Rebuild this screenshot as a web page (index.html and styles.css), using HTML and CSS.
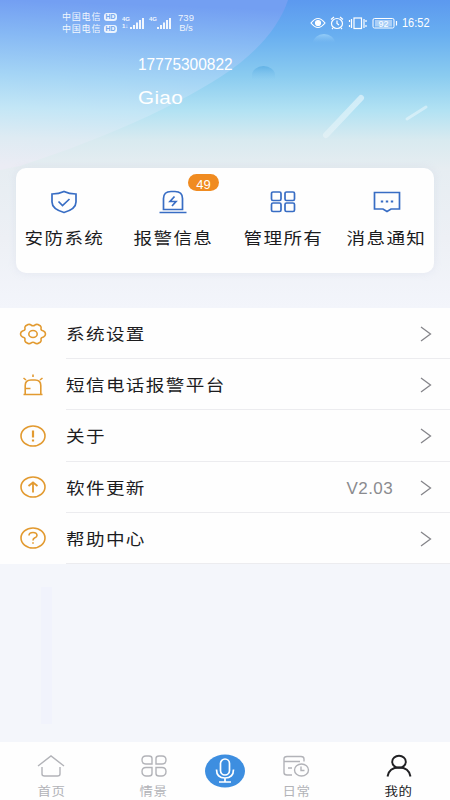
FILE: index.html
```html
<!DOCTYPE html>
<html lang="zh-CN">
<head>
<meta charset="utf-8">
<title>我的</title>
<link rel="stylesheet" href="styles.css">
</head>
<body>
<div class="app">
  <header class="hero">
    <svg class="scene" viewBox="0 0 450 170" preserveAspectRatio="none" aria-hidden="true">
      <defs>
        <linearGradient id="sky" x1="0" y1="0" x2="0" y2="1">
          <stop offset="0" stop-color="#5c99ef"/><stop offset=".2" stop-color="#68aef0"/>
          <stop offset=".45" stop-color="#8bccf0"/><stop offset=".65" stop-color="#b2e2f3"/>
          <stop offset=".82" stop-color="#d8eaf0"/><stop offset="1" stop-color="#e7edf1"/>
        </linearGradient>
        <linearGradient id="hill" gradientUnits="userSpaceOnUse" x1="6" y1="0" x2="0" y2="165">
          <stop offset="0" stop-color="#739ff2"/><stop offset=".2" stop-color="#86b8f4"/>
          <stop offset=".45" stop-color="#a5d5f5"/><stop offset=".65" stop-color="#c3e6f6"/>
          <stop offset=".83" stop-color="#deebf3"/><stop offset="1" stop-color="#ebecf4"/>
        </linearGradient>
        <linearGradient id="domeLight" x1="0" y1="0" x2="0" y2="1">
          <stop offset="0" stop-color="#94cdf8"/><stop offset="1" stop-color="#7fbdf1" stop-opacity="0"/>
        </linearGradient>
        <linearGradient id="domeDark" x1="0" y1="0" x2="0" y2="1">
          <stop offset="0" stop-color="#62b2e6"/><stop offset="1" stop-color="#83c6ee" stop-opacity="0"/>
        </linearGradient>
        <linearGradient id="ray" x1="1" y1="0" x2="0" y2="1">
          <stop offset="0" stop-color="#fff" stop-opacity=".5"/><stop offset="1" stop-color="#fff" stop-opacity=".3"/>
        </linearGradient>
      </defs>
      <rect width="450" height="170" fill="url(#sky)"/>
      <path d="M0 0H288C281 22 263 45 240 63C196 97 115 135 20 166L0 170Z" fill="url(#hill)"/>
      <path d="M313 43a11 9 0 0 1 22 0Z" fill="url(#domeLight)"/>
      <path d="M252 80v-5a11.500 9 0 0 1 23 0v5Z" fill="url(#domeDark)"/>
      <path d="M326 135L361 98" stroke="url(#ray)" stroke-width="6" stroke-linecap="round"/>
      <path d="M407 119L426 107" stroke="#fff" stroke-opacity=".4" stroke-width="3" stroke-linecap="round"/>
    </svg>
    <div class="status">
      <div class="carriers">
        <div class="carrier"><span>中国电信</span><b>HD</b></div>
        <div class="carrier"><span>中国电信</span><b>HD</b></div>
      </div>
      <svg class="signals" width="52" height="16" viewBox="0 0 52 16" fill="#fff">
        <text class="tiny" x="0" y="6">4G</text><text class="tiny" x="0" y="13">1↓</text>
        <path d="M8 12h2v2h-2zM11 10h2v4h-2zM14 7.500h2v6.500h-2zM17 5h2v9h-2zM20 3h2v11h-2z"/>
        <text class="tiny" x="27" y="6">4G</text>
        <path d="M35 12h2v2h-2zM38 10h2v4h-2zM41 7.500h2v6.500h-2zM44 5h2v9h-2zM47 3h2v11h-2z"/>
      </svg>
      <div class="speed"><span>739</span><span>B/s</span></div>
      <div class="system">
        <svg width="88" height="14" viewBox="0 0 88 14" fill="none" stroke="#fff" stroke-width="1.200">
          <path d="M1 7Q8 -2 15 7Q8 16 1 7Z"/><circle cx="8" cy="7" r="2.500" fill="#fff"/>
          <ellipse cx="27" cy="7.500" rx="5.500" ry="5"/><path d="M27 4.500v3l2 1.500M21 3.500l3-2.500M33 3.500l-3-2.500M23 12l-1 1M31 12l1 1"/>
          <rect x="44" y="2" width="7.500" height="10.500"/><path d="M41.500 3v9M54 3v9M39.500 4v2M39.500 9v2M56 4v2M56 9v2"/>
          <rect x="63" y="2.500" width="21" height="9.500" rx="1.500" stroke-width="1"/><rect x="65" y="4" width="17" height="6.500" fill="#fff" fill-opacity=".45" stroke="none"/><path d="M86.500 5v4.500"/>
          <text class="battery" x="73.500" y="10.500">92</text>
        </svg>
        <span class="clock">16:52</span>
      </div>
    </div>
    <div class="profile">
      <div class="phone">17775300822</div>
      <div class="name">Giao</div>
    </div>
  </header>

  <nav class="card">
    <a class="tile">
      <svg width="28" height="24" viewBox="0 0 28 24"><path d="M14 1.500Q19 4 26 4V12Q26 19 14 22.500Q2 19 2 12V4Q9 4 14 1.500Z"/><path d="M8.500 11.500l4 4 7-6.500"/></svg>
      <span class="wide">安防系统</span>
    </a>
    <a class="tile">
      <svg width="28" height="24" viewBox="0 0 28 24"><path d="M4.500 19.500V8.500Q4.500 1.500 12 1.500H16Q23.500 1.500 23.500 8.500V19.500Z"/><path d="M.5 22.500h27M15.500 6.500l-4.500 5h6l-4 4.500"/></svg>
      <span class="wide">报警信息</span>
      <span class="badge">49</span>
    </a>
    <a class="tile">
      <svg width="28" height="24" viewBox="0 0 28 24"><rect x="2.500" y="2" width="9.500" height="8.500" rx="1.500"/><rect x="16" y="2" width="9.500" height="8.500" rx="1.500"/><rect x="2.500" y="13" width="9.500" height="8.500" rx="1.500"/><rect x="16" y="13" width="9.500" height="8.500" rx="1.500"/></svg>
      <span class="wide">管理所有</span>
    </a>
    <a class="tile">
      <svg width="28" height="24" viewBox="0 0 28 24"><path d="M1.500 2.500H26.500V19H18L14 21.500L10 19H1.500Z"/><path class="dots" d="M7.800 11.500h2.400M12.800 11.500h2.400M17.800 11.500h2.400"/></svg>
      <span class="wide">消息通知</span>
    </a>
  </nav>

  <main class="list">
    <a class="row">
      <svg class="icon" width="28" height="24" viewBox="0 0 28 24"><path d="M9 2.500Q11 2 12 3Q14 4.500 16 3Q17 2 19 2.500L21.500 4Q22.500 5 22 7Q22 8.500 24.500 9Q26.500 10 26.500 12T24.500 15Q22 15.500 22 17Q22.500 19 21.500 20L19 21.500Q17 22 16 21Q14 19.500 12 21Q11 22 9 21.500L6.500 20Q5.500 19 6 17Q6 15.500 3.500 15Q1.500 14 1.500 12T3.500 9Q6 8.500 6 7Q5.500 5 6.500 4Z"/><ellipse cx="14" cy="12" rx="4.200" ry="3.500"/></svg>
      <span class="body"><span class="wide">系统设置</span><svg class="chev" width="12" height="16" viewBox="0 0 12 16"><path d="M1 1l9.500 7L1 15"/></svg></span>
    </a>
    <a class="row">
      <svg class="icon" width="28" height="24" viewBox="0 0 28 24"><path d="M4.500 21.500H23.500M6.200 21V12.500Q6.200 7 12 7H16Q21.800 7 21.800 12.500V21M6.500 15.500H11.500M14 1.500V4M4.500 5l2.500 2M23.500 5l-2.500 2"/></svg>
      <span class="body"><span class="wide">短信电话报警平台</span><svg class="chev" width="12" height="16" viewBox="0 0 12 16"><path d="M1 1l9.500 7L1 15"/></svg></span>
    </a>
    <a class="row">
      <svg class="icon" width="28" height="24" viewBox="0 0 28 24"><ellipse cx="14" cy="12" rx="12" ry="10"/><path d="M14 6.500V13.500M14 15.500V17.500" stroke-width="2.200"/></svg>
      <span class="body"><span class="wide">关于</span><svg class="chev" width="12" height="16" viewBox="0 0 12 16"><path d="M1 1l9.500 7L1 15"/></svg></span>
    </a>
    <a class="row">
      <svg class="icon" width="28" height="24" viewBox="0 0 28 24"><ellipse cx="14" cy="12" rx="12" ry="10"/><path d="M14 17.500V7.500M9.500 11L14 7.500L18.500 11" stroke-width="1.800"/></svg>
      <span class="body"><span class="wide">软件更新</span><span class="version">V2.03</span><svg class="chev" width="12" height="16" viewBox="0 0 12 16"><path d="M1 1l9.500 7L1 15"/></svg></span>
    </a>
    <a class="row">
      <svg class="icon" width="28" height="24" viewBox="0 0 28 24"><ellipse cx="14" cy="12" rx="12" ry="10"/><path d="M10 9.500Q10 6.500 14 6.500T18 9.500Q18 11 15.500 12Q14 12.800 14 14.500M14 16.300V17.800"/></svg>
      <span class="body"><span class="wide">帮助中心</span><svg class="chev" width="12" height="16" viewBox="0 0 12 16"><path d="M1 1l9.500 7L1 15"/></svg></span>
    </a>
  </main>

  <div class="rest"><i class="streak"></i></div>

  <footer class="tabs">
    <a class="tab">
      <svg width="28" height="24" viewBox="0 0 28 24"><path d="M1 12L14 2L27 12M5 13V20Q5 22 7.500 22H20.500Q23 22 23 20V13"/></svg>
      <span>首页</span>
    </a>
    <a class="tab">
      <svg width="28" height="24" viewBox="0 0 28 24"><path d="M6 2H9Q12 2 12 4.500V10H6Q2 10 2 6T6 2ZM22 2H19Q16 2 16 4.500V10H22Q26 10 26 6T22 2ZM6 22H9Q12 22 12 19.500V13.500H6Q2 13.500 2 17.500T6 22ZM22 22H19Q16 22 16 19.500V13.500H22Q26 13.500 26 17.500T22 22Z"/></svg>
      <span>情景</span>
    </a>
    <a class="mic">
      <svg width="40" height="34" viewBox="0 0 40 34"><ellipse cx="20" cy="17" rx="20" ry="16.500"/><rect x="15.500" y="5" width="9" height="16" rx="4.500"/><path d="M11.500 15.500Q11.500 24 20 24T28.500 15.500M20 24V28M14 28H26"/></svg>
    </a>
    <a class="tab">
      <svg width="28" height="24" viewBox="0 0 28 24"><path d="M10 21H5Q2 21 2 18.500V5Q2 2.500 5 2.500H19Q22 2.500 22 5V7.500M2 7.500H18M6 14h4"/><ellipse cx="19.500" cy="16" rx="7" ry="6"/><path d="M19 12.500V16.500H22.500"/></svg>
      <span>日常</span>
    </a>
    <a class="tab active">
      <svg width="28" height="24" viewBox="0 0 28 24"><ellipse cx="14" cy="7.800" rx="6.800" ry="6"/><path d="M2.500 22.500Q4 13.500 14 13.500T25.500 22.500"/></svg>
      <span>我的</span>
    </a>
  </footer>
</div>
</body>
</html>
```
FILE: styles.css
```css
* { box-sizing: border-box; }

body {
  margin: 0;
  font-family: "Liberation Sans", "Noto Sans CJK SC", sans-serif;
  color: #1c1c1e;
  background: #f4f6fb;
}

.app {
  width: 450px;
  height: 800px;
  display: flex;
  flex-direction: column;
  overflow: hidden;
}

.hero {
  position: relative;
  height: 168px;
  flex: none;
  color: #fff;
}

.scene {
  position: absolute;
  inset: 0;
  width: 450px;
  height: 170px;
}

.status {
  position: relative;
  height: 46px;
  padding: 0 21px 0 62px;
  display: flex;
  align-items: center;
}

.carriers {
  width: 60px;
  display: flex;
  flex-direction: column;
}

.carrier {
  height: 12px;
  display: flex;
  align-items: center;
  justify-content: space-between;
  margin-right: 5px;
}

.carrier span {
  width: 39px;
  font-size: 9px;
  line-height: 12px;
  letter-spacing: .8px;
  white-space: nowrap;
  opacity: .9;
}

.carrier b {
  width: 13px;
  height: 8px;
  border-radius: 3px;
  background: rgba(255, 255, 255, .85);
  color: #6fa6ee;
  font-size: 7px;
  line-height: 8px;
  text-align: center;
}

.signals { opacity: .9; }

.tiny { font-size: 6px; font-weight: 700; }

.speed {
  width: 24px;
  margin-left: 0;
  display: flex;
  flex-direction: column;
  align-items: center;
  font-size: 9.500px;
  line-height: 10px;
  opacity: .88;
}

.system {
  margin-left: auto;
  display: flex;
  align-items: center;
  gap: 4px;
}

.battery { fill: #fff; stroke: none; font-size: 9px; text-anchor: middle; }

.clock {
  width: 27px;
  font-size: 12.500px;
  line-height: 14px;
  transform: scaleX(.88);
  transform-origin: left;
}

.profile {
  position: relative;
  padding: 9px 0 0 138px;
}

.phone {
  font-size: 17px;
  line-height: 20px;
  transform: scaleX(.91);
  transform-origin: left;
}

.name {
  margin-top: 13px;
  font-size: 17.500px;
  line-height: 20px;
  letter-spacing: .3px;
  transform: scaleX(1.180);
  transform-origin: left;
}

.card {
  position: relative;
  flex: none;
  width: 418px;
  height: 105px;
  margin: 0 0 35px 16px;
  padding: 22px 0 0;
  display: grid;
  grid-template-columns: 96px 122px 98px 109px;
  border-radius: 10px;
  background: #fefefe;
  box-shadow: 0 0 8px rgba(170, 185, 210, .18);
}

.card::before {
  content: "";
  position: absolute;
  z-index: -1;
  inset: 0 -16px -35px;
  background: linear-gradient(#e6edf2, #edf0f5 50%, #f3f5fb);
}

.tile {
  position: relative;
  display: flex;
  flex-direction: column;
  align-items: center;
}

.tile svg { fill: none; stroke: #386dc4; stroke-width: 1.700; }

.tile .dots { stroke-width: 2; }

.wide {
  font-size: 16px;
  line-height: 24px;
  letter-spacing: 1.200px;
  white-space: nowrap;
  transform: scaleX(1.160);
}

.tile .wide { margin-top: 13px; }

.badge {
  position: absolute;
  top: -16px;
  left: 76px;
  width: 31px;
  height: 17px;
  border-radius: 9px;
  background: #f08b20;
  color: #fff;
  font-size: 13px;
  line-height: 21px;
  overflow: hidden;
  text-align: center;
}

.list {
  flex: none;
  height: 256px;
  display: grid;
  grid-template-rows: repeat(5, 1fr);
  background: #fefefe;
}

.row {
  display: flex;
  padding-left: 19px;
}

.icon {
  flex: none;
  align-self: center;
  margin-right: 19px;
  fill: none;
  stroke: #e29a30;
  stroke-width: 1.600;
}

.body {
  flex: 1;
  display: flex;
  align-items: center;
  padding: 2px 18px 0 0;
  border-bottom: 1px solid #ececef;
}

.body .wide {
  padding-top: 2px;
  transform-origin: left;
}

.version {
  margin-left: auto;
  margin-right: 27px;
  padding-top: 2px;
  font-size: 17px;
  letter-spacing: .4px;
  color: #8b8b8f;
}

.chev {
  fill: none;
  stroke: #85858a;
  stroke-width: 1.300;
}

.wide + .chev { margin-left: auto; }

.rest {
  flex: 1;
  background: #f4f6fb;
}

.streak {
  display: block;
  width: 11px;
  height: 137px;
  margin: 23px 0 0 41px;
  background: #f1f3fc;
}

.tabs {
  flex: none;
  height: 58px;
  display: grid;
  grid-template-columns: 102px 103px 40px 102px 103px;
  background: #fefefe;
}

.tab {
  padding-top: 12px;
  display: flex;
  flex-direction: column;
  align-items: center;
  color: #b2b3b8;
}

.tab svg {
  flex: none;
  fill: none;
  stroke: currentColor;
  stroke-width: 1.400;
}

.tab span {
  margin-top: 6px;
  font-size: 12px;
  line-height: 16px;
  letter-spacing: .4px;
  transform: scaleX(1.120);
}

.tab.active { color: #202023; }

.tab.active svg { stroke-width: 1.900; }

.mic { padding-top: 12px; }

.mic svg { display: block; fill: none; stroke: #fff; stroke-width: 1.700; }

.mic ellipse { fill: #3d8ee0; stroke: none; }
```
